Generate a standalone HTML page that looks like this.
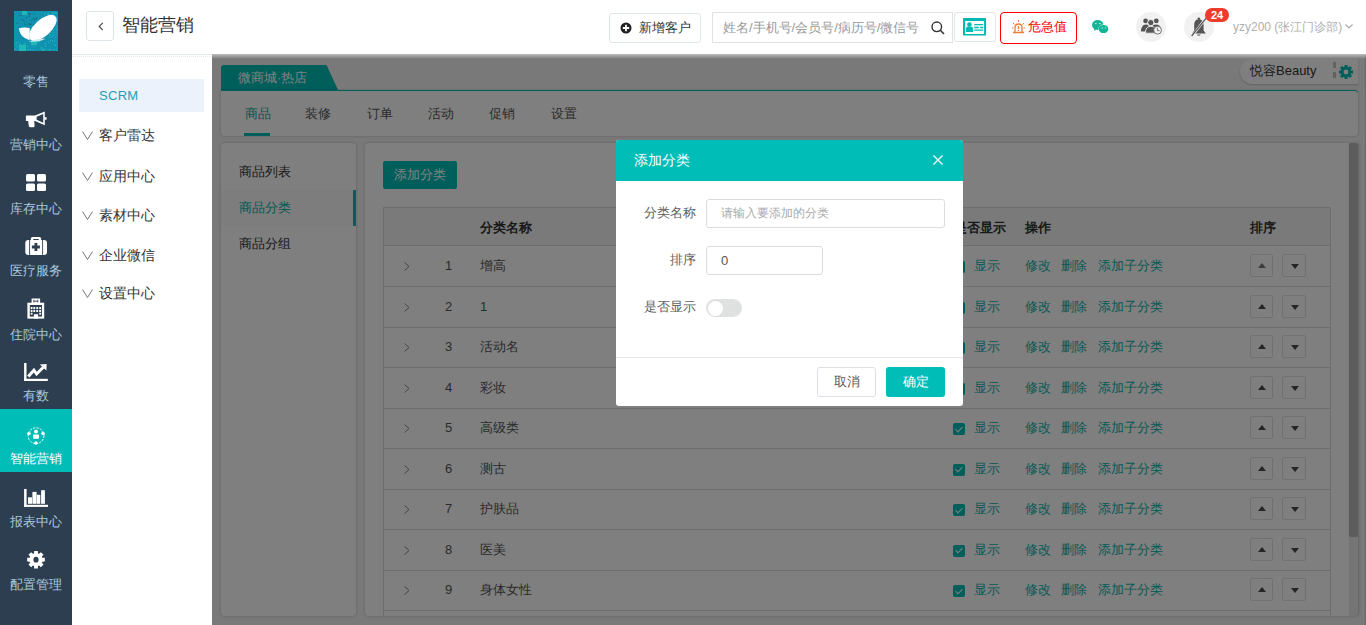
<!DOCTYPE html>
<html><head><meta charset="utf-8">
<style>
*{box-sizing:border-box;margin:0;padding:0}
html,body{width:1366px;height:625px;overflow:hidden;background:#fff;font-family:"Liberation Sans",sans-serif;color:#333}
.abs{position:absolute}
svg{display:block}
#side{position:absolute;left:0;top:0;width:72px;height:625px;background:#2c3e50}
.mi{position:absolute;left:0;width:72px;height:63px;color:#a9c8dc;font-size:13px;text-align:center}
.mi svg{position:absolute}
.mi .tx{position:absolute;left:0;width:72px;top:41px;line-height:18px;white-space:nowrap}
.mi.on{background:#00bdb7;color:#fff}
#hdr{position:absolute;left:72px;top:0;width:1294px;height:55px;background:#fff}
#sub{position:absolute;left:72px;top:55px;width:140px;height:570px;background:#fff}
.sm{position:absolute;left:7px;width:125px;height:33px;font-size:14px;color:#333;line-height:33px;white-space:nowrap}
.sm .chev{position:absolute;left:3px;top:12px;width:11px;height:9px}
.sm span{position:absolute;left:20px}
#main{position:absolute;left:212px;top:55px;width:1154px;height:570px;background:#f2f2f2;overflow:hidden}
#mask{position:absolute;left:212px;top:54px;width:1154px;height:571px;background:rgba(0,0,0,.5)}
#modal{position:absolute;left:616px;top:140px;width:347px;height:266px;background:#fff;border-radius:3px;overflow:hidden}
.hb{position:absolute;border:1px solid #dfe6e9;border-radius:3px;background:#fff}
.card{position:absolute;background:#fff;border-radius:4px;box-shadow:0 0 3px rgba(0,0,0,.22)}
.tab{position:absolute;top:13px;font-size:13px;color:#555;line-height:20px;white-space:nowrap}
.lm{position:absolute;left:0;width:135px;height:36px;line-height:36px;font-size:13px;color:#333;padding-left:18px;white-space:nowrap}
.row{position:absolute;left:0;width:947px;height:41px;border-bottom:1px solid #ddd;font-size:13px;color:#555;white-space:nowrap}
.row>*{position:absolute;top:0;line-height:40px}
.chk{position:absolute;top:15px;width:12px;height:12px;background:#00bdb7;border-radius:2px}
.chk:after{content:"";position:absolute;left:4px;top:1.5px;width:3px;height:6px;border-right:1px solid #fff;border-bottom:1px solid #fff;transform:rotate(45deg)}
.lk{color:#0fb3ab;font-weight:500}
.sb{position:absolute;top:8px;width:23px;height:23px;border:1px solid #e0e0e0;border-radius:2px;background:#fff}
.sb:after{content:"";position:absolute;left:7px;top:8px;border-left:4px solid transparent;border-right:4px solid transparent}
.sb.up:after{border-bottom:5px solid #4a4a4a}
.sb.dis:after{border-bottom-color:#7a7a7a}
.sb.dn:after{border-top:5px solid #4a4a4a;top:9px;left:7.5px}
.sb.dn{width:24px}
.fl{position:absolute;left:0;width:80px;text-align:right;font-size:13px;color:#606060;line-height:20px;white-space:nowrap}
.inp{position:absolute;left:90px;border:1px solid #dcdcdc;border-radius:3px;height:29px;font-size:13px;line-height:27px;padding-left:14px;white-space:nowrap}
</style></head><body>
<div id="side">
  <div class="abs" style="left:14px;top:11px;width:44px;height:40px;background:#0f93b0;overflow:hidden"><svg width="44" height="40" viewBox="0 0 44 40"><rect x="6.8" y="8.1" width="1" height="1" fill="#24606e"/><rect x="9.4" y="8.9" width="1" height="1" fill="#24606e"/><rect x="14.5" y="1.9" width="1" height="1" fill="#24606e"/><rect x="2.3" y="11.9" width="1" height="1" fill="#24606e"/><rect x="7.2" y="4.0" width="1" height="1" fill="#24606e"/><rect x="21.9" y="7.1" width="1" height="1" fill="#24606e"/><rect x="18.7" y="7.2" width="1" height="1" fill="#24606e"/><rect x="14.8" y="3.0" width="1" height="1" fill="#24606e"/><rect x="14.7" y="12.3" width="1" height="1" fill="#24606e"/><rect x="12.5" y="10.6" width="1" height="1" fill="#24606e"/><rect x="15.4" y="1.8" width="1" height="1" fill="#24606e"/><rect x="17.2" y="8.7" width="1" height="1" fill="#24606e"/><rect x="8.0" y="1.4" width="1" height="1" fill="#24606e"/><rect x="19.3" y="7.1" width="1" height="1" fill="#24606e"/><rect x="16.4" y="12.4" width="1" height="1" fill="#24606e"/><rect x="16.3" y="13.0" width="1" height="1" fill="#24606e"/><rect x="9.9" y="11.4" width="1" height="1" fill="#24606e"/><rect x="10.9" y="13.2" width="1" height="1" fill="#24606e"/><rect x="19.6" y="2.3" width="1" height="1" fill="#24606e"/><rect x="4.7" y="3.8" width="1" height="1" fill="#24606e"/><rect x="21.3" y="6.7" width="1" height="1" fill="#24606e"/><rect x="14.5" y="4.9" width="1" height="1" fill="#24606e"/><rect x="12.1" y="6.0" width="1" height="1" fill="#24606e"/><rect x="9.0" y="8.6" width="1" height="1" fill="#24606e"/><rect x="13.7" y="12.8" width="1" height="1" fill="#24606e"/><rect x="15.6" y="13.1" width="1" height="1" fill="#24606e"/><rect x="19.1" y="13.9" width="1" height="1" fill="#24606e"/><rect x="15.4" y="3.1" width="1" height="1" fill="#24606e"/><rect x="19.2" y="13.5" width="1" height="1" fill="#24606e"/><rect x="20.1" y="8.4" width="1" height="1" fill="#24606e"/><rect x="40.0" y="8.4" width="1" height="1" fill="#2cc0bf"/><rect x="41.6" y="22.9" width="1" height="1" fill="#2cc0bf"/><rect x="34.0" y="2.5" width="1" height="1" fill="#2cc0bf"/><rect x="42.0" y="39.6" width="1" height="1" fill="#2cc0bf"/><rect x="31.2" y="32.0" width="1" height="1" fill="#2cc0bf"/><rect x="35.7" y="6.0" width="1" height="1" fill="#2cc0bf"/><rect x="34.1" y="30.8" width="1" height="1" fill="#2cc0bf"/><rect x="42.2" y="1.8" width="1" height="1" fill="#2cc0bf"/><rect x="38.6" y="1.8" width="1" height="1" fill="#2cc0bf"/><rect x="40.1" y="13.2" width="1" height="1" fill="#2cc0bf"/><rect x="42.3" y="39.2" width="1" height="1" fill="#2cc0bf"/><rect x="37.1" y="39.9" width="1" height="1" fill="#2cc0bf"/><rect x="34.3" y="3.1" width="1" height="1" fill="#2cc0bf"/><rect x="38.4" y="1.3" width="1" height="1" fill="#2cc0bf"/><rect x="32.8" y="16.3" width="1" height="1" fill="#2cc0bf"/><rect x="38.5" y="6.2" width="1" height="1" fill="#2cc0bf"/><rect x="30.6" y="34.7" width="1" height="1" fill="#2cc0bf"/><rect x="34.4" y="38.3" width="1" height="1" fill="#2cc0bf"/><rect x="42.6" y="15.1" width="1" height="1" fill="#2cc0bf"/><rect x="36.4" y="20.8" width="1" height="1" fill="#2cc0bf"/><rect x="39.0" y="23.8" width="1" height="1" fill="#2cc0bf"/><rect x="37.8" y="24.8" width="1" height="1" fill="#2cc0bf"/><rect x="43.2" y="20.3" width="1" height="1" fill="#2cc0bf"/><rect x="36.0" y="28.8" width="1" height="1" fill="#2cc0bf"/><rect x="33.3" y="12.0" width="1" height="1" fill="#2cc0bf"/><rect x="43.7" y="20.8" width="1" height="1" fill="#2cc0bf"/><rect x="37.7" y="0.5" width="1" height="1" fill="#2cc0bf"/><rect x="35.8" y="23.2" width="1" height="1" fill="#2cc0bf"/><rect x="30.3" y="24.6" width="1" height="1" fill="#2cc0bf"/><rect x="38.9" y="2.4" width="1" height="1" fill="#2cc0bf"/><rect x="38.8" y="18.7" width="1" height="1" fill="#2cc0bf"/><rect x="39.5" y="14.1" width="1" height="1" fill="#2cc0bf"/><rect x="39.9" y="29.5" width="1" height="1" fill="#2cc0bf"/><rect x="30.3" y="2.4" width="1" height="1" fill="#2cc0bf"/><rect x="39.5" y="38.5" width="1" height="1" fill="#2cc0bf"/><rect x="33.5" y="18.3" width="1" height="1" fill="#2cc0bf"/><rect x="38.3" y="12.8" width="1" height="1" fill="#2cc0bf"/><rect x="35.1" y="12.5" width="1" height="1" fill="#2cc0bf"/><rect x="35.2" y="23.8" width="1" height="1" fill="#2cc0bf"/><rect x="34.2" y="15.1" width="1" height="1" fill="#2cc0bf"/><rect x="40.8" y="1.1" width="1" height="1" fill="#2cc0bf"/><rect x="38.0" y="29.4" width="1" height="1" fill="#2cc0bf"/><rect x="34.3" y="8.9" width="1" height="1" fill="#2cc0bf"/><rect x="41.3" y="9.5" width="1" height="1" fill="#2cc0bf"/><rect x="32.6" y="17.4" width="1" height="1" fill="#2cc0bf"/><rect x="39.8" y="4.1" width="1" height="1" fill="#2cc0bf"/><rect x="34.5" y="13.4" width="1" height="1" fill="#2cc0bf"/><rect x="41.7" y="17.5" width="1" height="1" fill="#2cc0bf"/><rect x="42.0" y="6.8" width="1" height="1" fill="#2cc0bf"/><rect x="34.7" y="26.0" width="1" height="1" fill="#2cc0bf"/><rect x="42.4" y="18.0" width="1" height="1" fill="#2cc0bf"/><rect x="33.2" y="4.8" width="1" height="1" fill="#2cc0bf"/><rect x="37.4" y="7.6" width="1" height="1" fill="#2cc0bf"/><rect x="41.3" y="33.5" width="1" height="1" fill="#2cc0bf"/><rect x="32.6" y="11.1" width="1" height="1" fill="#2cc0bf"/><rect x="41.3" y="25.7" width="1" height="1" fill="#2cc0bf"/><rect x="41.3" y="13.8" width="1" height="1" fill="#2cc0bf"/><rect x="31.8" y="11.7" width="1" height="1" fill="#2cc0bf"/><rect x="41.1" y="10.8" width="1" height="1" fill="#2cc0bf"/><rect x="34.8" y="16.7" width="1" height="1" fill="#2cc0bf"/><rect x="35.9" y="16.4" width="1" height="1" fill="#2cc0bf"/><rect x="42.9" y="6.2" width="1" height="1" fill="#2cc0bf"/><rect x="30.1" y="37.7" width="1" height="1" fill="#2cc0bf"/><rect x="42.3" y="39.5" width="1" height="1" fill="#2cc0bf"/><rect x="36.1" y="38.0" width="1" height="1" fill="#2cc0bf"/><rect x="43.0" y="8.9" width="1" height="1" fill="#2cc0bf"/><rect x="40.4" y="33.5" width="1" height="1" fill="#2cc0bf"/><rect x="39.3" y="20.8" width="1" height="1" fill="#2cc0bf"/><rect x="34.0" y="13.6" width="1" height="1" fill="#2cc0bf"/><rect x="33.2" y="2.7" width="1" height="1" fill="#2cc0bf"/><rect x="17.7" y="32.9" width="1" height="1" fill="#2cc0bf"/><rect x="24.3" y="30.5" width="1" height="1" fill="#2cc0bf"/><rect x="27.1" y="36.9" width="1" height="1" fill="#2cc0bf"/><rect x="27.7" y="39.0" width="1" height="1" fill="#2cc0bf"/><rect x="27.0" y="35.8" width="1" height="1" fill="#2cc0bf"/><rect x="0.4" y="37.5" width="1" height="1" fill="#2cc0bf"/><rect x="5.2" y="33.0" width="1" height="1" fill="#2cc0bf"/><rect x="19.9" y="35.2" width="1" height="1" fill="#2cc0bf"/><rect x="12.4" y="39.4" width="1" height="1" fill="#2cc0bf"/><rect x="18.4" y="33.4" width="1" height="1" fill="#2cc0bf"/><rect x="7.6" y="38.6" width="1" height="1" fill="#2cc0bf"/><rect x="14.3" y="37.8" width="1" height="1" fill="#2cc0bf"/><rect x="10.6" y="32.0" width="1" height="1" fill="#2cc0bf"/><rect x="16.0" y="38.2" width="1" height="1" fill="#2cc0bf"/><rect x="5.1" y="37.9" width="1" height="1" fill="#2cc0bf"/><rect x="27.7" y="38.1" width="1" height="1" fill="#2cc0bf"/><rect x="24.7" y="30.1" width="1" height="1" fill="#2cc0bf"/><rect x="18.9" y="38.6" width="1" height="1" fill="#2cc0bf"/><rect x="1.5" y="32.7" width="1" height="1" fill="#2cc0bf"/><rect x="8.1" y="35.3" width="1" height="1" fill="#2cc0bf"/><rect x="12.7" y="34.7" width="1" height="1" fill="#2cc0bf"/><rect x="23.3" y="30.0" width="1" height="1" fill="#2cc0bf"/><rect x="1.6" y="31.3" width="1" height="1" fill="#2cc0bf"/><rect x="3.7" y="30.7" width="1" height="1" fill="#2cc0bf"/><rect x="29.2" y="38.5" width="1" height="1" fill="#2cc0bf"/><rect x="2.6" y="35.0" width="1" height="1" fill="#2cc0bf"/><rect x="9.5" y="33.1" width="1" height="1" fill="#2cc0bf"/><rect x="10.5" y="36.5" width="1" height="1" fill="#2cc0bf"/><rect x="17.6" y="33.6" width="1" height="1" fill="#2cc0bf"/><rect x="5.7" y="33.3" width="1" height="1" fill="#2cc0bf"/><rect x="8" y="0" width="5" height="4" fill="#1fb8b8"/><rect x="5" y="34" width="7" height="6" fill="#1fb8b8"/><rect x="17" y="30" width="6" height="4" fill="#1fb8b8"/><ellipse cx="28.8" cy="16.8" rx="17" ry="8.3" transform="rotate(-42 28.8 16.8)" fill="#fff"/><path d="M4.8 17.6 Q9.5 15.5 15.6 17 V29.2 Q6 26.5 4.8 17.6Z" fill="#fff"/><path d="M15.4 17.5 V29" stroke="#c9e6ee" stroke-width=".7"/><path d="M14.5 30.6 Q23 27 31.5 27.8 Q26 31.3 14.5 30.6Z" fill="#cfeaf0"/></svg></div>
  <div class="mi" style="top:33px"><div class="tx" style="top:40px">零售</div></div>
  <div class="mi" style="top:94px">
    <svg style="left:25px;top:17px" width="22" height="19" viewBox="0 0 22 19"><path d="M1.5 4.4 H10 L19.8 0.6 V14.2 L10 10.1 H9.2 L9.6 14.8 Q9.7 16.3 8.2 16.3 H5.5 Q4 16.3 3.8 14.8 L3.1 10.1 H1.5 Q0.9 10.1 0.9 9.5 V5 Q0.9 4.4 1.5 4.4Z" fill="#fff"/><path d="M11.6 5.7 L18.2 3 V11.8 L11.6 8.8Z" fill="#2c3e50"/><rect x="19.6" y="6.2" width="2" height="2.5" fill="#fff"/></svg>
    <div class="tx" style="top:42px">营销中心</div></div>
  <div class="mi" style="top:157px">
    <svg style="left:26px;top:17px" width="20" height="17" viewBox="0 0 20 17"><rect x="0" y="0" width="9" height="7.5" rx="1.5" fill="#fff"/><rect x="11" y="0" width="9" height="7.5" rx="1.5" fill="#fff"/><rect x="0" y="9.5" width="9" height="7.5" rx="1.5" fill="#fff"/><rect x="11" y="9.5" width="9" height="7.5" rx="1.5" fill="#fff"/></svg>
    <div class="tx" style="top:42.5px">库存中心</div></div>
  <div class="mi" style="top:220px">
    <svg style="left:25px;top:17px" width="23" height="19" viewBox="0 0 23 19"><rect x="5.9" y="0" width="10.2" height="5" rx="1.6" fill="#fff"/><rect x="8.3" y="2" width="5.4" height="1" fill="#2c3e50"/><rect x="0.3" y="2.9" width="21.7" height="15" rx="3" fill="#fff"/><path d="M4.6 2.9 V17.9 M17.6 2.9 V17.9" stroke="#2c3e50" stroke-width=".9"/><path d="M9.5 6 H12.3 V8.6 H14.9 V11.4 H12.3 V14 H9.5 V11.4 H6.9 V8.6 H9.5Z" fill="#2c3e50"/></svg>
    <div class="tx" style="top:42px">医疗服务</div></div>
  <div class="mi" style="top:283px">
    <svg style="left:27px;top:15px" width="18" height="22" viewBox="0 0 18 22"><rect x="4.6" y="0.5" width="8.5" height="6" fill="#fff"/><path d="M6.9 1.8 V4.6 M10.8 1.8 V4.6 M6.9 3.2 H10.8" stroke="#2c3e50" stroke-width=".9"/><rect x="0.4" y="4.7" width="16.8" height="15.9" fill="#fff"/><rect x="2.8" y="7" width="12.1" height="11.6" fill="#2c3e50"/><g fill="#fff"><rect x="3.7" y="9" width="1.8" height="2"/><rect x="6.4" y="9" width="1.8" height="2"/><rect x="9.3" y="9" width="1.8" height="2"/><rect x="12.2" y="9" width="1.8" height="2"/><rect x="3.7" y="11.9" width="1.8" height="2.1"/><rect x="6.4" y="11.9" width="1.8" height="2.1"/><rect x="9.3" y="11.9" width="1.8" height="2.1"/><rect x="12.2" y="11.9" width="1.8" height="2.1"/><rect x="3.7" y="14.8" width="1.8" height="1.8"/><rect x="12.2" y="14.8" width="1.8" height="1.8"/><rect x="6.9" y="16.2" width="4.2" height="4.4"/></g></svg>
    <div class="tx" style="top:42.5px">住院中心</div></div>
  <div class="mi" style="top:346px">
    <svg style="left:24px;top:16px" width="25" height="20" viewBox="0 0 25 20"><rect x="0.1" y="1" width="2.4" height="18" fill="#fff"/><rect x="0.1" y="16.8" width="23.7" height="2.2" fill="#fff"/><path d="M4.3 14.4 L9.9 8.2 L12.6 12 L19.5 5" stroke="#fff" stroke-width="3" fill="none"/><path d="M15.8 2.4 L22.6 2.1 L22.4 8.6Z" fill="#fff"/></svg>
    <div class="tx" style="top:41px">有数</div></div>
  <div class="mi on" style="top:409px">
    <svg style="left:24px;top:13px" width="24" height="26" viewBox="0 0 24 26"><circle cx="12" cy="13.7" r="7.9" stroke="#fff" stroke-width="1" fill="none" stroke-dasharray="2.2 1.2"/><ellipse cx="5" cy="11.4" rx="1.9" ry="1.5" fill="#fff"/><ellipse cx="19" cy="11.4" rx="1.9" ry="1.5" fill="#fff"/><circle cx="12" cy="21" r="1.8" fill="#fff"/><circle cx="12" cy="9.6" r="2" fill="#fff"/><rect x="9" y="12.4" width="6" height="4.4" rx=".8" fill="#fff"/></svg>
    <div class="tx">智能营销</div></div>
  <div class="mi" style="top:472px">
    <svg style="left:24px;top:16px" width="25" height="19" viewBox="0 0 25 19"><g fill="#fff"><rect x="0.1" y="1" width="2.5" height="17.9"/><rect x="0.1" y="16.8" width="23.9" height="2.1"/><rect x="4" y="9.3" width="4" height="6.5"/><rect x="8.4" y="3.9" width="4.2" height="11.9"/><rect x="12.8" y="6.8" width="3.5" height="9"/><rect x="17.1" y="2.2" width="3.8" height="13.6"/></g></svg>
    <div class="tx">报表中心</div></div>
  <div class="mi" style="top:535px">
    <svg style="left:26px;top:15px" width="20" height="20" viewBox="0 0 20 20"><path d="M8.07 3.39 L8.13 0.90 L11.87 0.90 L11.93 3.39 L13.10 3.87 L14.90 2.15 L17.55 4.80 L15.83 6.60 L16.31 7.77 L18.80 7.83 L18.80 11.57 L16.31 11.63 L15.83 12.80 L17.55 14.60 L14.90 17.25 L13.10 15.53 L11.93 16.01 L11.87 18.50 L8.13 18.50 L8.07 16.01 L6.90 15.53 L5.10 17.25 L2.45 14.60 L4.17 12.80 L3.69 11.63 L1.20 11.57 L1.20 7.83 L3.69 7.77 L4.17 6.60 L2.45 4.80 L5.10 2.15 L6.90 3.87Z" fill="#fff"/><ellipse cx="10" cy="9.7" rx="2.6" ry="2.9" fill="#2c3e50"/></svg>
    <div class="tx">配置管理</div></div>
</div>

<div id="hdr">
  <div class="hb" style="left:14px;top:11px;width:28px;height:30px"><svg style="position:absolute;left:10.5px;top:10px" width="6" height="9" viewBox="0 0 6 9"><path d="M4.8 0.8 L1.2 4.5 L4.8 8.2" stroke="#444" stroke-width="1.1" fill="none"/></svg></div>
  <div class="abs" style="left:50px;top:12px;font-size:18px;line-height:26px;color:#333;white-space:nowrap">智能营销</div>

  <div class="hb" style="left:537px;top:13px;width:92px;height:30px">
    <svg style="position:absolute;left:10px;top:8px" width="12" height="12" viewBox="0 0 12 12"><circle cx="6" cy="6" r="5.5" fill="#222"/><path d="M6 2.8 V9.2 M2.8 6 H9.2" stroke="#fff" stroke-width="1.8"/></svg>
    <div class="abs" style="left:29px;top:5px;font-size:13px;line-height:18px;color:#333;white-space:nowrap">新增客户</div>
  </div>
  <div class="abs" style="left:640px;top:12px;width:241px;height:31px;border:1px solid #e2e2e2;overflow:hidden">
    <div class="abs" style="left:10px;top:5px;font-size:13px;line-height:20px;color:#999;white-space:nowrap">姓名/手机号/会员号/病历号/微信号</div>
    <div class="abs" style="left:206px;top:0;width:34px;height:29px;background:#fff"></div>
    <svg style="position:absolute;left:218px;top:8px" width="14" height="14" viewBox="0 0 14 14"><circle cx="5.8" cy="5.8" r="4.8" stroke="#333" stroke-width="1.4" fill="none"/><path d="M9.3 9.3 L13 13" stroke="#333" stroke-width="1.6"/></svg>
  </div>
  <div class="hb" style="left:882px;top:12px;width:42px;height:30px">
    <svg style="position:absolute;left:8px;top:5px" width="24" height="19" viewBox="0 0 24 19"><path fill-rule="evenodd" d="M0.8 0 H22.3 Q23.1 0 23.1 0.8 V16.7 Q23.1 17.5 22.3 17.5 H0.8 Q0 17.5 0 16.7 V0.8 Q0 0 0.8 0Z M2.1 3.1 V16 H21.1 V3.1Z" fill="#00b9b3"/><circle cx="6.4" cy="6.5" r="2.3" fill="#00b9b3"/><path d="M3 13.9 V10.5 Q3 8.4 5 8.4 H7.9 Q10 8.4 10 10.5 V13.9Z" fill="#00b9b3"/><path d="M11.2 6.7 H20.1 M11.2 9.5 H15.8 M17.2 9.5 H20.1 M11.2 12.2 H20.1" stroke="#00b9b3" stroke-width="1.3"/></svg>
  </div>
  <div class="abs" style="left:928px;top:12px;width:77px;height:32px;border:1px solid #ff0000;border-radius:4px">
    <svg style="position:absolute;left:11px;top:7px" width="13" height="14" viewBox="0 0 13 14"><path d="M3 12 V8 Q3 4 6.5 4 Q10 4 10 8 V12" stroke="#f07a3a" stroke-width="1.3" fill="none"/><path d="M1 12.5 H12" stroke="#f07a3a" stroke-width="1.5"/><path d="M6.5 6 V9 M6.5 10 V11" stroke="#f07a3a" stroke-width="1.2"/><path d="M6.5 0 V2 M1 3 L2.5 4.5 M12 3 L10.5 4.5 M0 8 H1.5 M11.5 8 H13" stroke="#f07a3a" stroke-width="1"/></svg>
    <div class="abs" style="left:27px;top:5px;font-size:13px;line-height:18px;color:#ff0000;white-space:nowrap">危急值</div>
  </div>
  <svg style="position:absolute;left:1020px;top:19px" width="18" height="15" viewBox="0 0 18 15"><ellipse cx="5.7" cy="6" rx="5.7" ry="4.9" fill="#12b596"/><path d="M2 9.5 L2.4 11.8 L4.6 10.3Z" fill="#12b596"/><ellipse cx="11.5" cy="10" rx="5.1" ry="4.4" fill="#fff"/><ellipse cx="11.5" cy="10" rx="4.8" ry="4.1" fill="#12b596"/><g fill="#fff" opacity=".85"><rect x="3" y="4.2" width="1.7" height=".9"/><rect x="7" y="4.2" width="1.7" height=".9"/><rect x="9.6" y="8.5" width="1.4" height=".9"/><rect x="12.9" y="8.5" width="1.3" height=".9"/></g></svg>
  <div class="abs" style="left:1064px;top:12px;width:30px;height:30px;border-radius:50%;background:#f1f1f1"><svg style="position:absolute;left:0;top:0" width="30" height="30" viewBox="0 0 30 30"><circle cx="9.6" cy="8.9" r="2.4" fill="#555"/><circle cx="20.3" cy="8.9" r="2.4" fill="#555"/><path d="M5 19.5 Q5.2 13 9.6 12.6 Q12 12.6 13 14 L9 19.5Z" fill="#555"/><path d="M16 14 Q17.5 12.6 20.3 12.6 Q24 13 24.6 16 L19 19Z" fill="#555"/><circle cx="14.8" cy="10.6" r="3.1" fill="#555" stroke="#f1f1f1" stroke-width=".9"/><path d="M9.4 21.2 Q9.4 14.3 14.8 14.3 Q20.2 14.3 20.2 21.2Z" fill="#555" stroke="#f1f1f1" stroke-width=".9"/><circle cx="21.6" cy="18.2" r="3.9" fill="#f1f1f1" stroke="#666" stroke-width=".9"/><path d="M21.4 15.8 V18.6 H23.6" stroke="#666" stroke-width=".9" fill="none"/></svg></div>
  <div class="abs" style="left:1112px;top:12px;width:30px;height:30px;border-radius:50%;background:#f1f1f1"><svg style="position:absolute;left:0;top:0" width="30" height="30" viewBox="0 0 30 30"><circle cx="14.8" cy="6.8" r="1.3" fill="#555"/><path d="M14.8 7.3 C11 7.3 10.2 10.5 10.2 13.5 V18.5 L8.2 21.6 H21.8 L19.6 18.5 V13.5 C19.6 10.5 18.8 7.3 14.8 7.3Z" fill="#555"/><path d="M12.8 22.4 Q14.8 25 16.8 22.4Z" fill="#555"/><path d="M22.6 5.2 L7.6 24.5" stroke="#f1f1f1" stroke-width="2.4"/><path d="M22.6 5.6 L7.6 24" stroke="#555" stroke-width="1.2"/></svg></div>
  <div class="abs" style="left:1133px;top:8px;width:24px;height:14px;border-radius:7px;background:#f03a2b;color:#fff;font-size:11px;font-weight:bold;line-height:14px;text-align:center">24</div>
  <div class="abs" style="left:1161px;top:18px;font-size:12px;line-height:18px;color:#b0b0b0;white-space:nowrap">yzy200 (张江门诊部)</div>
  <svg style="position:absolute;left:1273px;top:24px" width="8" height="5" viewBox="0 0 8 5"><path d="M0.5 0.5 L4 4 L7.5 0.5" stroke="#aaa" stroke-width="1.1" fill="none"/></svg>
</div>

<div id="sub">
  <div class="sm" style="top:24px;background:#ebf2fb;color:#1f9eb3;padding-left:20px;font-size:13px;letter-spacing:.3px">SCRM</div>
  <div class="sm" style="top:64px"><svg class="chev" viewBox="0 0 11 9"><path d="M0.5 0.5 L5.5 8.5 L10.5 0.5" stroke="#777" stroke-width="1" fill="none"/></svg><span>客户雷达</span></div>
  <div class="sm" style="top:104.5px"><svg class="chev" viewBox="0 0 11 9"><path d="M0.5 0.5 L5.5 8.5 L10.5 0.5" stroke="#777" stroke-width="1" fill="none"/></svg><span>应用中心</span></div>
  <div class="sm" style="top:143.5px"><svg class="chev" viewBox="0 0 11 9"><path d="M0.5 0.5 L5.5 8.5 L10.5 0.5" stroke="#777" stroke-width="1" fill="none"/></svg><span>素材中心</span></div>
  <div class="sm" style="top:183.5px"><svg class="chev" viewBox="0 0 11 9"><path d="M0.5 0.5 L5.5 8.5 L10.5 0.5" stroke="#777" stroke-width="1" fill="none"/></svg><span>企业微信</span></div>
  <div class="sm" style="top:222px"><svg class="chev" viewBox="0 0 11 9"><path d="M0.5 0.5 L5.5 8.5 L10.5 0.5" stroke="#777" stroke-width="1" fill="none"/></svg><span>设置中心</span></div>
</div>

<div id="main">
  <!-- store tab -->
  <svg style="position:absolute;left:9px;top:10px" width="118" height="26" viewBox="0 0 118 26"><path d="M0 3 Q0 0 3 0 H105.5 L117.5 26 H0Z" fill="#00bdb7"/></svg>
  <div class="abs" style="left:26px;top:13px;font-size:13px;line-height:20px;color:#fff;white-space:nowrap">微商城·热店</div>
  <!-- pill -->
  <div class="abs" style="left:1028px;top:4px;width:118px;height:25px;background:#fff;border-radius:12.5px 0 0 12.5px;box-shadow:0 1px 2px rgba(0,0,0,.18)"></div>
  <div class="abs" style="left:1038px;top:6px;font-size:13px;line-height:20px;color:#333;white-space:nowrap">悦容Beauty</div>
  <div class="abs" style="left:1121px;top:7px;height:16px;border-left:3px dashed #c4c4c4"></div>
  <svg style="position:absolute;left:1126px;top:9px" width="16" height="16" viewBox="0 0 20 20"><path d="M8.07 3.69 L8.13 1.20 L11.87 1.20 L11.93 3.69 L13.10 4.17 L14.90 2.45 L17.55 5.10 L15.83 6.90 L16.31 8.07 L18.80 8.13 L18.80 11.87 L16.31 11.93 L15.83 13.10 L17.55 14.90 L14.90 17.55 L13.10 15.83 L11.93 16.31 L11.87 18.80 L8.13 18.80 L8.07 16.31 L6.90 15.83 L5.10 17.55 L2.45 14.90 L4.17 13.10 L3.69 11.93 L1.20 11.87 L1.20 8.13 L3.69 8.07 L4.17 6.90 L2.45 5.10 L5.10 2.45 L6.90 4.17Z" fill="#00bdb7"/><circle cx="10" cy="10" r="3" fill="#fff"/></svg>
  <!-- nav card -->
  <div class="card" style="left:9px;top:35px;width:1137px;height:46px;border-top:1px solid #00bdb7;border-radius:0 4px 4px 4px">
    <div class="tab" style="left:24px;color:#14a8a0">商品</div>
    <div class="abs" style="left:23px;top:42px;width:26px;height:3px;background:#00bdb7"></div>
    <div class="tab" style="left:84px">装修</div>
    <div class="tab" style="left:146px">订单</div>
    <div class="tab" style="left:207px">活动</div>
    <div class="tab" style="left:268px">促销</div>
    <div class="tab" style="left:330px">设置</div>
  </div>
  <!-- left menu card -->
  <div class="card" style="left:9px;top:88px;width:135px;height:473px">
    <div class="lm" style="top:11px">商品列表</div>
    <div class="lm" style="top:47px;color:#00b3ab;background:#fafafa;border-right:3px solid #00bdb7;font-weight:500">商品分类</div>
    <div class="lm" style="top:83px">商品分组</div>
  </div>
  <!-- right content card -->
  <div class="card" style="left:153px;top:88px;width:984px;height:473px;overflow:hidden;border-radius:4px 0 0 4px">
    <div class="abs" style="left:18px;top:18px;width:74px;height:28px;background:#00bdb7;border-radius:2px;color:#fff;font-size:13px;line-height:28px;text-align:center">添加分类</div>
    <div class="abs" style="left:18px;top:64px;width:948px;height:500px;border-left:1px solid #ddd;border-right:1px solid #ddd;border-top:1px solid #ddd">
      <div class="abs" style="left:0;top:0;width:946px;height:38px;background:#f5f5f5;border-bottom:1px solid #ddd;font-size:13px;font-weight:bold;color:#333;white-space:nowrap">
        <div class="abs" style="left:96px;top:11px">分类名称</div>
        <div class="abs" style="left:570px;top:11px">是否显示</div>
        <div class="abs" style="left:641px;top:11px">操作</div>
        <div class="abs" style="left:866px;top:11px">排序</div>
      </div>
<div class="row" style="top:38.0px">
<svg style="left:20px;top:16px;position:absolute" width="6" height="9" viewBox="0 0 6 9"><path d="M0.5 0.5 L5 4.5 L0.5 8.5" stroke="#888" stroke-width="1" fill="none"/></svg>
<div style="left:61px">1</div><div style="left:96px">增高</div>
<i class="chk" style="left:569px"></i><div class="lk" style="left:590px">显示</div>
<div class="lk" style="left:641px">修改</div><div class="lk" style="left:677px">删除</div><div class="lk" style="left:714px">添加子分类</div>
<b class="sb up dis" style="left:866px"></b><b class="sb dn" style="left:898px"></b></div>
<div class="row" style="top:78.5px">
<svg style="left:20px;top:16px;position:absolute" width="6" height="9" viewBox="0 0 6 9"><path d="M0.5 0.5 L5 4.5 L0.5 8.5" stroke="#888" stroke-width="1" fill="none"/></svg>
<div style="left:61px">2</div><div style="left:96px">1</div>
<i class="chk" style="left:569px"></i><div class="lk" style="left:590px">显示</div>
<div class="lk" style="left:641px">修改</div><div class="lk" style="left:677px">删除</div><div class="lk" style="left:714px">添加子分类</div>
<b class="sb up" style="left:866px"></b><b class="sb dn" style="left:898px"></b></div>
<div class="row" style="top:119.0px">
<svg style="left:20px;top:16px;position:absolute" width="6" height="9" viewBox="0 0 6 9"><path d="M0.5 0.5 L5 4.5 L0.5 8.5" stroke="#888" stroke-width="1" fill="none"/></svg>
<div style="left:61px">3</div><div style="left:96px">活动名</div>
<i class="chk" style="left:569px"></i><div class="lk" style="left:590px">显示</div>
<div class="lk" style="left:641px">修改</div><div class="lk" style="left:677px">删除</div><div class="lk" style="left:714px">添加子分类</div>
<b class="sb up" style="left:866px"></b><b class="sb dn" style="left:898px"></b></div>
<div class="row" style="top:159.5px">
<svg style="left:20px;top:16px;position:absolute" width="6" height="9" viewBox="0 0 6 9"><path d="M0.5 0.5 L5 4.5 L0.5 8.5" stroke="#888" stroke-width="1" fill="none"/></svg>
<div style="left:61px">4</div><div style="left:96px">彩妆</div>
<i class="chk" style="left:569px"></i><div class="lk" style="left:590px">显示</div>
<div class="lk" style="left:641px">修改</div><div class="lk" style="left:677px">删除</div><div class="lk" style="left:714px">添加子分类</div>
<b class="sb up" style="left:866px"></b><b class="sb dn" style="left:898px"></b></div>
<div class="row" style="top:200.0px">
<svg style="left:20px;top:16px;position:absolute" width="6" height="9" viewBox="0 0 6 9"><path d="M0.5 0.5 L5 4.5 L0.5 8.5" stroke="#888" stroke-width="1" fill="none"/></svg>
<div style="left:61px">5</div><div style="left:96px">高级类</div>
<i class="chk" style="left:569px"></i><div class="lk" style="left:590px">显示</div>
<div class="lk" style="left:641px">修改</div><div class="lk" style="left:677px">删除</div><div class="lk" style="left:714px">添加子分类</div>
<b class="sb up" style="left:866px"></b><b class="sb dn" style="left:898px"></b></div>
<div class="row" style="top:240.5px">
<svg style="left:20px;top:16px;position:absolute" width="6" height="9" viewBox="0 0 6 9"><path d="M0.5 0.5 L5 4.5 L0.5 8.5" stroke="#888" stroke-width="1" fill="none"/></svg>
<div style="left:61px">6</div><div style="left:96px">测古</div>
<i class="chk" style="left:569px"></i><div class="lk" style="left:590px">显示</div>
<div class="lk" style="left:641px">修改</div><div class="lk" style="left:677px">删除</div><div class="lk" style="left:714px">添加子分类</div>
<b class="sb up" style="left:866px"></b><b class="sb dn" style="left:898px"></b></div>
<div class="row" style="top:281.0px">
<svg style="left:20px;top:16px;position:absolute" width="6" height="9" viewBox="0 0 6 9"><path d="M0.5 0.5 L5 4.5 L0.5 8.5" stroke="#888" stroke-width="1" fill="none"/></svg>
<div style="left:61px">7</div><div style="left:96px">护肤品</div>
<i class="chk" style="left:569px"></i><div class="lk" style="left:590px">显示</div>
<div class="lk" style="left:641px">修改</div><div class="lk" style="left:677px">删除</div><div class="lk" style="left:714px">添加子分类</div>
<b class="sb up" style="left:866px"></b><b class="sb dn" style="left:898px"></b></div>
<div class="row" style="top:321.5px">
<svg style="left:20px;top:16px;position:absolute" width="6" height="9" viewBox="0 0 6 9"><path d="M0.5 0.5 L5 4.5 L0.5 8.5" stroke="#888" stroke-width="1" fill="none"/></svg>
<div style="left:61px">8</div><div style="left:96px">医美</div>
<i class="chk" style="left:569px"></i><div class="lk" style="left:590px">显示</div>
<div class="lk" style="left:641px">修改</div><div class="lk" style="left:677px">删除</div><div class="lk" style="left:714px">添加子分类</div>
<b class="sb up" style="left:866px"></b><b class="sb dn" style="left:898px"></b></div>
<div class="row" style="top:362.0px">
<svg style="left:20px;top:16px;position:absolute" width="6" height="9" viewBox="0 0 6 9"><path d="M0.5 0.5 L5 4.5 L0.5 8.5" stroke="#888" stroke-width="1" fill="none"/></svg>
<div style="left:61px">9</div><div style="left:96px">身体女性</div>
<i class="chk" style="left:569px"></i><div class="lk" style="left:590px">显示</div>
<div class="lk" style="left:641px">修改</div><div class="lk" style="left:677px">删除</div><div class="lk" style="left:714px">添加子分类</div>
<b class="sb up" style="left:866px"></b><b class="sb dn" style="left:898px"></b></div>
<div class="row" style="top:402.5px">
<svg style="left:20px;top:16px;position:absolute" width="6" height="9" viewBox="0 0 6 9"><path d="M0.5 0.5 L5 4.5 L0.5 8.5" stroke="#888" stroke-width="1" fill="none"/></svg>
<div style="left:61px">10</div><div style="left:96px"></div>
<i class="chk" style="left:569px"></i><div class="lk" style="left:590px">显示</div>
<div class="lk" style="left:641px">修改</div><div class="lk" style="left:677px">删除</div><div class="lk" style="left:714px">添加子分类</div>
<b class="sb up" style="left:866px"></b><b class="sb dn" style="left:898px"></b></div>
    </div>
  </div>
  <div class="abs" style="left:1137px;top:88px;width:9px;height:473px;background:#ebebeb;border-radius:0 0 4px 0;box-shadow:1px 0 3px rgba(0,0,0,.2)"></div><div class="abs" style="left:1137px;top:88px;width:9px;height:394px;background:#b8b8b8;border-radius:2px"></div><div class="abs" style="left:1153px;top:0;width:1px;height:570px;background:#d0d0d0"></div>
</div>
<div id="mask"></div><div class="abs" style="left:212px;top:54px;width:1154px;height:5px;background:linear-gradient(rgba(255,255,255,.5),rgba(255,255,255,0))"></div><div class="abs" style="left:72px;top:54px;width:140px;height:1px;background:#e3edf0"></div><div class="abs" style="left:72px;top:56px;width:140px;height:0;border-top:1px dotted #e8e8e8"></div>
<div id="modal">
  <div class="abs" style="left:0;top:0;width:347px;height:41px;background:#00bdb7"></div>
  <div class="abs" style="left:18px;top:10px;font-size:14px;line-height:20px;color:#fff;white-space:nowrap">添加分类</div>
  <svg style="position:absolute;left:317px;top:15px" width="10" height="10" viewBox="0 0 10 10"><path d="M0.5 0.5 L9.5 9.5 M9.5 0.5 L0.5 9.5" stroke="#fff" stroke-width="1.2"/></svg>
  <div class="fl" style="top:63px">分类名称</div>
  <div class="inp" style="top:59px;width:239px;color:#aaa;font-size:12px">请输入要添加的分类</div>
  <div class="fl" style="top:110px">排序</div>
  <div class="inp" style="top:106px;width:117px;color:#555">0</div>
  <div class="fl" style="top:157px">是否显示</div>
  <div class="abs" style="left:90px;top:159px;width:36px;height:18px;border-radius:9px;background:#dfe0e0"></div>
  <div class="abs" style="left:91.5px;top:160.5px;width:15px;height:15px;border-radius:50%;background:#fff"></div>
  <div class="abs" style="left:0;top:217px;width:347px;height:1px;background:#e6e6e6"></div>
  <div class="abs" style="left:201px;top:227px;width:59px;height:30px;border:1px solid #dcdfe6;border-radius:3px;font-size:13px;line-height:28px;text-align:center;color:#555">取消</div>
  <div class="abs" style="left:270px;top:227px;width:59px;height:30px;background:#00bdb7;border-radius:3px;font-size:13px;line-height:30px;text-align:center;color:#fff">确定</div>
</div>
</body></html>
